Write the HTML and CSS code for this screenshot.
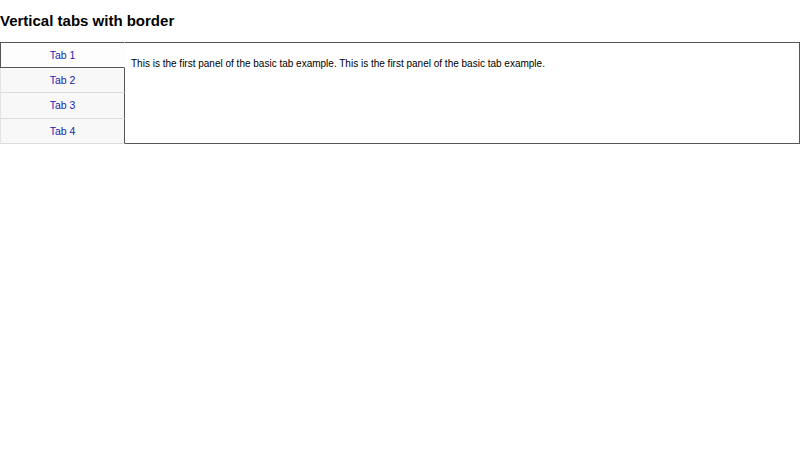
FILE: index.html
```html
<!DOCTYPE html>
<html>
<head>
<meta charset="utf-8">
<link rel="stylesheet" href="styles.css">
</head>
<body>
<h2 class="title">Vertical tabs with border</h2>
<div class="tabs">
  <ul class="tablist">
    <li class="tab active">Tab 1</li>
    <li class="tab">Tab 2</li>
    <li class="tab tall">Tab 3</li>
    <li class="tab">Tab 4</li>
  </ul>
  <div class="panel">
    <p class="panel-text">This is the first panel of the basic tab example. This is the first panel of the basic tab example.</p>
  </div>
</div>
</body>
</html>
```
FILE: styles.css
```css
html, body {
  margin: 0;
  padding: 0;
  background: #fff;
}
body {
  font-family: "Liberation Sans", Arial, sans-serif;
  font-size: 10px;
  color: #000;
}
.title {
  font-size: 15px;
  font-weight: bold;
  margin: 0.83em 0;
  color: #000;
}
.tabs {
  display: flex;
  width: 800px;
}
.tablist {
  list-style: none;
  margin: 0;
  padding: 0;
  width: 125px;
  display: flex;
  flex-direction: column;
  flex: none;
}
.tab {
  box-sizing: border-box;
  height: 25px;
  display: flex;
  align-items: center;
  justify-content: center;
  color: #2323a8;
  background: #f8f8f8;
  border-left: 1px solid #e2e2e2;
  border-bottom: 1px solid #dcdcdc;
  border-right: 1px solid #555;
  font-size: 10.5px;
}
.tab.active {
  background: #fdfdfd;
  border: 1px solid #555;
  border-right: 1px solid transparent;
  height: 26px;
}
.tab.tall {
  height: 26px;
}
.panel {
  flex: 1;
  box-sizing: border-box;
  border-top: 1px solid #555;
  border-right: 1px solid #555;
  border-bottom: 1px solid #555;
  padding: 15px 6px;
}
.panel-text {
  margin: 0;
  font-size: 10px;
  color: #000;
}
```
